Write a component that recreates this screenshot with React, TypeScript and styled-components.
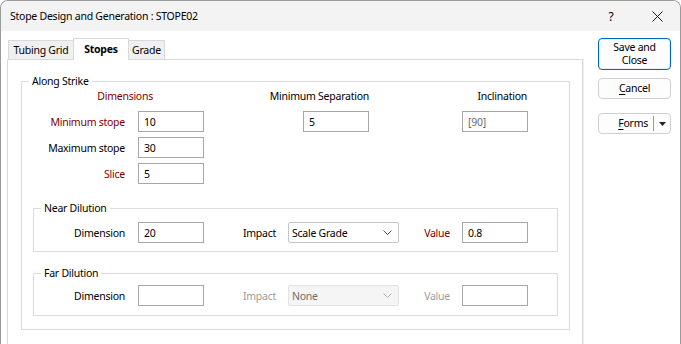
import React from "react";
import styled, { createGlobalStyle, css } from "styled-components";

const Global = createGlobalStyle`
  html, body { margin: 0; padding: 0; background: #fff; }
  * { box-sizing: border-box; }
`;

const FONT = `"Noto Sans", "Open Sans", sans-serif`;
const MAROON = "#800000";

const Window = styled.div`
  width: 681px;
  height: 344px;
  border: 1px solid #9a9a9a;
  border-bottom: none;
  border-radius: 8px 8px 0 0;
  background: #fff;
  overflow: hidden;
  display: flex;
  flex-direction: column;
  font-family: ${FONT};
  font-size: 10.5px;
  letter-spacing: -0.25px;
  color: #000;
`;

const TitleBar = styled.div`
  height: 30px;
  flex: none;
  background: #f3f3f3;
  display: flex;
  align-items: center;
  padding-left: 9px;
`;

const TitleText = styled.span`
  flex: 1;
  white-space: nowrap;
`;

const CaptionButton = styled.div`
  width: 46px;
  height: 30px;
  display: flex;
  align-items: center;
  justify-content: center;
  font-size: 12px;
`;

const Body = styled.div`
  flex: 1;
  display: flex;
  padding: 7px 9px 0 6px;
  min-height: 0;
`;

const LeftCol = styled.div`
  width: 577px;
  display: flex;
  flex-direction: column;
`;

const TabStrip = styled.div`
  height: 22px;
  display: flex;
  align-items: flex-end;
  padding-left: 1px;
  margin-bottom: -1px;
  position: relative;
  z-index: 1;
`;

const Tab = styled.div<{ $w: number; $active?: boolean }>`
  width: ${(p) => p.$w}px;
  height: 20px;
  margin-left: -1px;
  &:first-child { margin-left: 0; }
  border: 1px solid #d9d9d9;
  background: #f0f0f0;
  display: flex;
  align-items: center;
  justify-content: center;
  white-space: nowrap;
  ${(p) =>
    p.$active &&
    css`
      height: 22px;
      background: #fff;
      border-bottom: none;
      font-weight: 700;
      position: relative;
      z-index: 2;
      padding-bottom: 2px;
    `}
`;

const Panel = styled.div`
  border: 1px solid #d9d9d9;
  box-shadow: 1px 0 0 #efefef;
  padding: 21px 12px 40px 13px;
`;

const Group = styled.div<{ $mt?: number; $pt: number; $pb: number; $mx?: number }>`
  position: relative;
  border: 1px solid #dcdcdc;
  margin: ${(p) => p.$mt ?? 0}px ${(p) => p.$mx ?? 0}px 0;
  padding: ${(p) => p.$pt}px 0 ${(p) => p.$pb}px;
`;

const Caption = styled.span`
  position: absolute;
  top: -9px;
  left: 7px;
  padding: 0 3px;
  background: #fff;
  line-height: 16px;
  white-space: nowrap;
`;

const StrikeGrid = styled.div`
  display: grid;
  grid-template-columns: 116px 66px 99px 66px 93px 66px;
  grid-template-rows: 18px;
  grid-auto-rows: 21px;
  row-gap: 5px;
  align-items: center;
`;

const Header = styled.div<{ $col: string; $mr?: number; $red?: boolean }>`
  grid-column: ${(p) => p.$col};
  justify-self: end;
  margin-right: ${(p) => p.$mr ?? 0}px;
  color: ${(p) => (p.$red ? MAROON : "#000")};
  line-height: 16px;
  align-self: start;
  white-space: nowrap;
`;

const HeaderRow = styled.div`
  display: contents;
`;

const Label = styled.div<{ $red?: boolean; $disabled?: boolean; $pr?: number }>`
  text-align: right;
  padding-right: ${(p) => p.$pr ?? 13}px;
  white-space: nowrap;
  color: ${(p) => (p.$disabled ? "#9d9d9d" : p.$red ? MAROON : "#000")};
`;

const Input = styled.div<{ $readonly?: boolean }>`
  width: 66px;
  height: 21px;
  border: 1px solid #a7a7a7;
  background: #fff;
  padding-left: 5px;
  display: flex;
  align-items: center;
  color: ${(p) => (p.$readonly ? "#6d6d6d" : "#000")};
`;

const Spacer = styled.div``;

const DilutionRow = styled.div`
  display: grid;
  grid-template-columns: 104px 66px 84px 111px 63px 66px;
  height: 21px;
  align-items: center;
`;

const Select = styled.div<{ $disabled?: boolean }>`
  height: 21px;
  border: 1px solid ${(p) => (p.$disabled ? "#e2e2e2" : "#c6c6c6")};
  border-radius: 2px;
  background: ${(p) => (p.$disabled ? "#f5f5f5" : "#fff")};
  color: ${(p) => (p.$disabled ? "#6d6d6d" : "#000")};
  display: flex;
  align-items: center;
  justify-content: space-between;
  padding: 0 6px 0 3px;
`;

const RightCol = styled.div`
  margin-left: 15px;
  width: 73px;
  display: flex;
  flex-direction: column;
`;

const Button = styled.div<{ $primary?: boolean; $h: number; $mt: number }>`
  height: ${(p) => p.$h}px;
  margin-top: ${(p) => p.$mt}px;
  border: 1px solid ${(p) => (p.$primary ? "#0067c0" : "#d0d0d0")};
  box-shadow: ${(p) => (p.$primary ? "inset 0 0 0 1px #e6f0fa" : "none")};
  border-radius: 4px;
  background: #fdfdfd;
  display: flex;
  align-items: center;
  justify-content: center;
  text-align: center;
  line-height: 13px;
`;

const SplitText = styled.span`
  flex: 1;
  text-align: right;
  padding-right: 5px;
`;

const SplitDivider = styled.span`
  width: 1px;
  height: 15px;
  background: #9a9a9a;
`;

const SplitArrow = styled.span`
  width: 16px;
  display: flex;
  justify-content: center;
`;

const U = styled.span`
  text-decoration: underline;
  text-underline-offset: 2px;
`;

const Chevron = ({ color }: { color: string }) => (
  <svg width="9" height="5" viewBox="0 0 9 5">
    <path d="M0.5 0.5 L4.5 4.5 L8.5 0.5" fill="none" stroke={color} strokeWidth="1" />
  </svg>
);

export default function App() {
  return (
    <>
      <Global />
      <Window>
        <TitleBar>
          <TitleText>Stope Design and Generation : STOPE02</TitleText>
          <CaptionButton>?</CaptionButton>
          <CaptionButton>
            <svg width="11" height="11" viewBox="0 0 11 11">
              <path d="M0.5 0.5 L10.5 10.5 M10.5 0.5 L0.5 10.5" stroke="#1a1a1a" strokeWidth="1" />
            </svg>
          </CaptionButton>
        </TitleBar>
        <Body>
          <LeftCol>
            <TabStrip>
              <Tab $w={66}>Tubing Grid</Tab>
              <Tab $w={56} $active>
                Stopes
              </Tab>
              <Tab $w={37}>Grade</Tab>
            </TabStrip>
            <Panel>
              <Group $pt={6} $pb={13}>
                <Caption>Along Strike</Caption>
                <StrikeGrid>
                  <HeaderRow>
                    <Header $col="1 / 3" $mr={51} $red>
                      Dimensions
                    </Header>
                    <Header $col="3 / 5">Minimum Separation</Header>
                    <Header $col="5 / 7" $mr={1}>
                      Inclination
                    </Header>
                  </HeaderRow>
                  <Label $red>Minimum stope</Label>
                  <Input>10</Input>
                  <Spacer />
                  <Input>5</Input>
                  <Spacer />
                  <Input $readonly>[90]</Input>
                  <Label>Maximum stope</Label>
                  <Input>30</Input>
                  <Spacer />
                  <Spacer />
                  <Spacer />
                  <Spacer />
                  <Label $red>Slice</Label>
                  <Input>5</Input>
                </StrikeGrid>
                <Group $mt={24} $mx={11} $pt={13} $pb={8}>
                  <Caption>Near Dilution</Caption>
                  <DilutionRow>
                    <Label>Dimension</Label>
                    <Input>20</Input>
                    <Label $pr={12}>Impact</Label>
                    <Select>
                      <span>Scale Grade</span>
                      <Chevron color="#555" />
                    </Select>
                    <Label $pr={12} $red>
                      Value
                    </Label>
                    <Input>0.8</Input>
                  </DilutionRow>
                </Group>
                <Group $mt={21} $mx={11} $pt={11} $pb={9}>
                  <Caption>Far Dilution</Caption>
                  <DilutionRow>
                    <Label>Dimension</Label>
                    <Input />
                    <Label $pr={12} $disabled>
                      Impact
                    </Label>
                    <Select $disabled>
                      <span>None</span>
                      <Chevron color="#b5b5b5" />
                    </Select>
                    <Label $pr={12} $disabled>
                      Value
                    </Label>
                    <Input />
                  </DilutionRow>
                </Group>
              </Group>
            </Panel>
          </LeftCol>
          <RightCol>
            <Button $primary $h={32} $mt={0}>
              Save and
              <br />
              Close
            </Button>
            <Button $h={21} $mt={8}>
              <span>
                <U>C</U>ancel
              </span>
            </Button>
            <Button $h={21} $mt={14}>
              <SplitText>
                <U>F</U>orms
              </SplitText>
              <SplitDivider />
              <SplitArrow>
                <svg width="7" height="4" viewBox="0 0 7 4">
                  <path d="M0 0 H7 L3.5 4 Z" fill="#222" />
                </svg>
              </SplitArrow>
            </Button>
          </RightCol>
        </Body>
      </Window>
    </>
  );
}
